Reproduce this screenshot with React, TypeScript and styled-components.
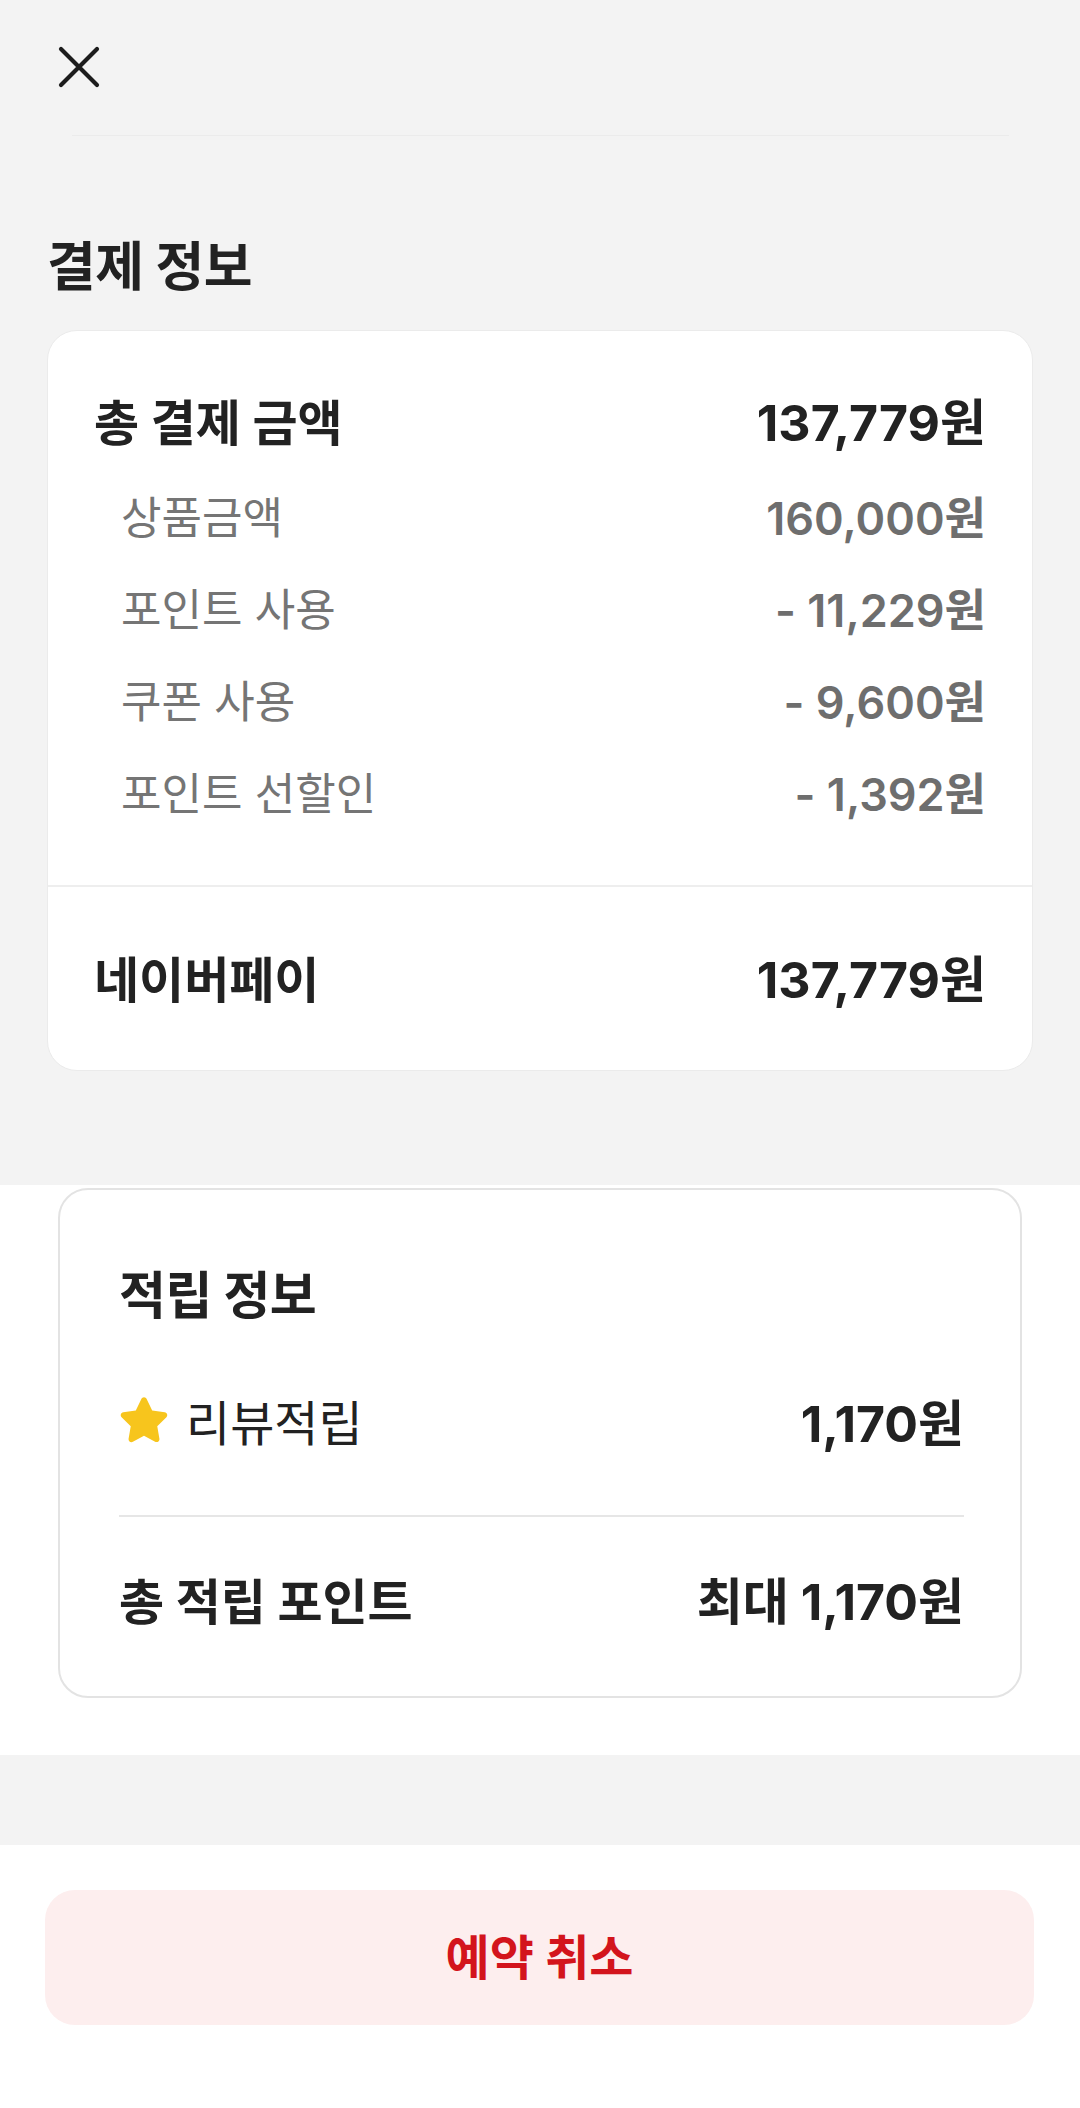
import React from 'react';
import styled, { createGlobalStyle } from 'styled-components';

const GlobalStyle = createGlobalStyle`
    html, body {
        margin: 0;
        padding: 0;
        background: #ffffff;
    }
    body {
        font-family: Inter, 'Noto Sans CJK KR', sans-serif;
        color: #222222;
        -webkit-font-smoothing: antialiased;
    }
    * {
        box-sizing: border-box;
    }
`;

const ScPage = styled.div`
    width: 1080px;
    min-height: 2108px;
    display: flex;
    flex-direction: column;
    background: #ffffff;
`;

const GraySection = styled.section`
    background: #f3f3f3;
    padding: 0 47px 114px;
`;

const Header = styled.header`
    display: flex;
    align-items: center;
    height: 135px;
    padding-left: 10px;
    padding-bottom: 2px;
`;

const HeaderLine = styled.div`
    height: 1px;
    margin: 0 24px 0 25px;
    background: #ebebeb;
`;

const CloseButton = styled.button`
    display: flex;
    align-items: center;
    justify-content: center;
    width: 44px;
    height: 44px;
    padding: 0;
    border: none;
    background: transparent;
`;

const SectionTitle = styled.h2`
    margin: 0;
    padding: 98px 0 30px;
    line-height: 66px;
    font-size: 53px;
    font-weight: 700;
    letter-spacing: -0.5px;
    color: #222222;
`;

const Card = styled.div<{ $outlined?: boolean }>`
    background: #ffffff;
    border-radius: 30px;
    border: ${({ $outlined }) => ($outlined ? '2px solid #e3e3e3' : '1px solid #ebebeb')};
    overflow: hidden;
`;

const CardBody = styled.div`
    padding: 38px 46px 48px 46px;
`;

const Row = styled.div<{ $height: number; $sub?: boolean }>`
    display: flex;
    align-items: center;
    justify-content: space-between;
    height: ${({ $height }) => $height}px;
    padding-left: ${({ $sub }) => ($sub ? 27 : 0)}px;
`;

const Label = styled.span<{ $tone: 'strong' | 'muted' | 'plain' }>`
    display: flex;
    align-items: center;
    gap: 17px;
    font-size: ${({ $tone }) => ($tone === 'muted' ? 44 : $tone === 'plain' ? 48 : 49)}px;
    font-weight: ${({ $tone }) => ($tone === 'strong' ? 700 : 400)};
    letter-spacing: 0;
    color: ${({ $tone }) => ($tone === 'muted' ? '#757575' : '#222222')};
`;

const Amount = styled.span<{ $muted?: boolean }>`
    font-size: ${({ $muted }) => ($muted ? 45 : 50)}px;
    font-weight: ${({ $muted }) => ($muted ? 600 : 700)};
    letter-spacing: 0;
    color: ${({ $muted }) => ($muted ? '#6e6e6e' : '#222222')};
`;

const Divider = styled.hr<{ $inset?: boolean }>`
    margin: 0;
    border: none;
    height: 2px;
    background: ${({ $inset }) => ($inset ? '#e6e6e6' : '#eeeeee')};
`;

const PayRow = styled(Row)`
    padding: 0 46px 5px 46px;
`;

const WhiteSection = styled.section`
    background: #ffffff;
    padding: 3px 58px 57px;
`;

const RewardBody = styled.div`
    padding: 71px 56px 53px 59px;
`;

const RewardTitle = styled.h3`
    margin: 0 0 52px;
    height: 62px;
    display: flex;
    align-items: center;
    font-size: 51px;
    font-weight: 700;
    letter-spacing: -0.5px;
`;

const RewardDivider = styled(Divider)`
    margin: 50px 0 36px;
`;

const Spacer = styled.div`
    height: 90px;
    background: #f3f3f3;
`;

const Footer = styled.footer`
    padding: 45px 46px 85px 45px;
    background: #ffffff;
`;

const CancelButton = styled.button`
    display: flex;
    align-items: center;
    justify-content: center;
    width: 100%;
    height: 135px;
    padding: 0 0 8px;
    border: none;
    border-radius: 30px;
    background: #fdeeee;
    color: #d3141c;
    font-family: Inter, 'Noto Sans CJK KR', sans-serif;
    font-size: 48px;
    font-weight: 700;
    letter-spacing: 0;
`;

const CloseIcon = () => (
    <svg width="44" height="44" viewBox="0 0 44 44" fill="none">
        <path
            d="M4 4 L40 40 M40 4 L4 40"
            stroke="#1c1c1c"
            strokeWidth="4.2"
            strokeLinecap="round"
        />
    </svg>
);

const StarIcon = () => (
    <svg width="50" height="47" viewBox="2.2 1.5 19.6 19.5">
        <path
            d="M12 1.6c.5 0 .9.3 1.1.7l2.3 4.8 5.2.7c1 .1 1.4 1.4.7 2.1l-3.8 3.7.9 5.2c.2 1-.9 1.7-1.8 1.3L12 17.6l-4.6 2.5c-.9.5-2-.3-1.8-1.3l.9-5.2-3.8-3.7c-.7-.7-.3-2 .7-2.1l5.2-.7 2.3-4.8c.2-.4.6-.7 1.1-.7z"
            fill="#f7c51d"
        />
    </svg>
);

const breakdown = [
    { label: '상품금액', amount: '160,000원' },
    { label: '포인트 사용', amount: '- 11,229원' },
    { label: '쿠폰 사용', amount: '- 9,600원' },
    { label: '포인트 선할인', amount: '- 1,392원' },
];

const App = () => {
    return (
        <>
            <GlobalStyle />
            <ScPage>
                <GraySection>
                    <Header>
                        <CloseButton aria-label="close">
                            <CloseIcon />
                        </CloseButton>
                    </Header>
                    <HeaderLine />

                    <SectionTitle>결제 정보</SectionTitle>

                    <Card>
                        <CardBody>
                            <Row $height={100}>
                                <Label $tone="strong">총 결제 금액</Label>
                                <Amount>137,779원</Amount>
                            </Row>
                            {breakdown.map((item) => (
                                <Row key={item.label} $height={92} $sub>
                                    <Label $tone="muted">{item.label}</Label>
                                    <Amount $muted>{item.amount}</Amount>
                                </Row>
                            ))}
                        </CardBody>
                        <Divider />
                        <PayRow $height={183}>
                            <Label $tone="strong">네이버페이</Label>
                            <Amount>137,779원</Amount>
                        </PayRow>
                    </Card>
                </GraySection>

                <WhiteSection>
                    <Card $outlined>
                        <RewardBody>
                            <RewardTitle>적립 정보</RewardTitle>
                            <Row $height={90}>
                                <Label $tone="plain">
                                    <StarIcon />
                                    리뷰적립
                                </Label>
                                <Amount>1,170원</Amount>
                            </Row>
                            <RewardDivider $inset />
                            <Row $height={90}>
                                <Label $tone="strong">총 적립 포인트</Label>
                                <Amount>최대 1,170원</Amount>
                            </Row>
                        </RewardBody>
                    </Card>
                </WhiteSection>

                <Spacer />

                <Footer>
                    <CancelButton>예약 취소</CancelButton>
                </Footer>
            </ScPage>
        </>
    );
};

export default App;
